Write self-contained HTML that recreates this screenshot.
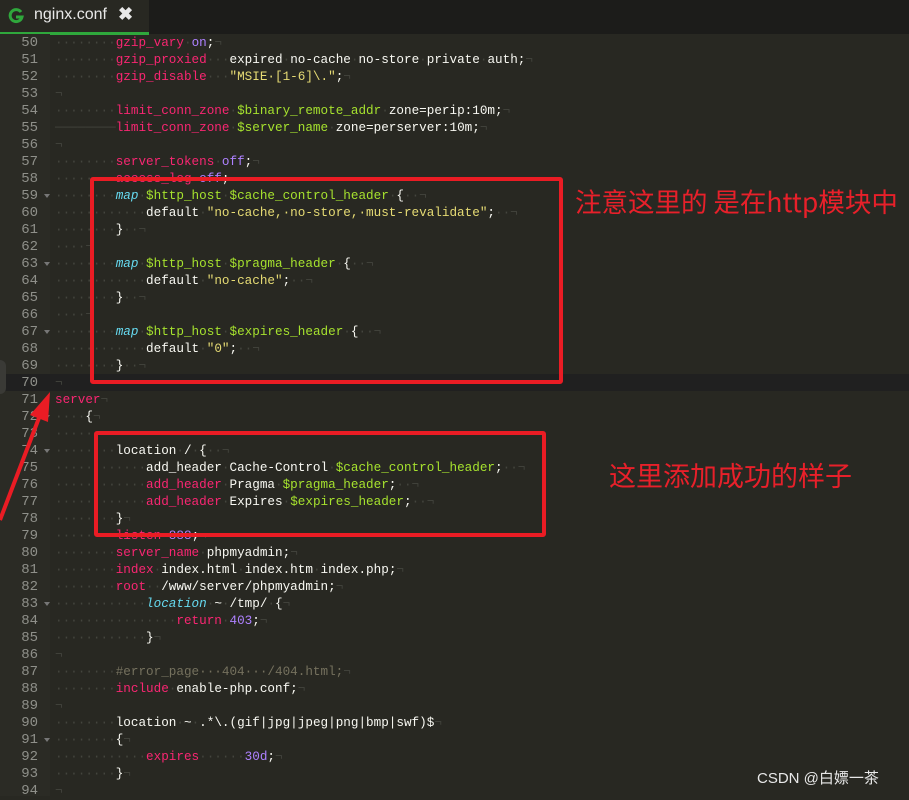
<!DOCTYPE html><html><head><meta charset="utf-8"><style>
body{margin:0;width:909px;height:796px;overflow:hidden;background:#282822;position:relative;font-family:"Liberation Mono",monospace}
.tabbar{position:absolute;left:0;top:0;width:909px;height:34px;background:#1c1c1a}
.tab{position:absolute;left:0;top:0;width:149px;height:32px;background:#282822;border-bottom:3px solid #2fa83c;box-sizing:content-box}
.tab span{position:absolute;left:34px;top:6px;color:#e8e8e8;font:16px "Liberation Sans",sans-serif}
.gut{position:absolute;left:0;top:34px;width:50px;height:762px;background:#2b2b25}
.hl{position:absolute;left:0;top:374px;width:909px;height:17px;background:#202020}
pre{position:absolute;left:0;top:34px;margin:0;font-size:12.65px;line-height:17px;color:#f8f8f2}
.n{display:inline-block;width:38px;text-align:right;color:#8f908a;margin-right:17px;position:relative;top:1px;font-size:14px;line-height:17px;vertical-align:top}
.f::after{content:"";position:absolute;right:-12px;top:6px;border:3px solid transparent;border-top:4px solid #777}
.d{color:#44453e}.p{color:#f92672}.u{color:#ae81ff}.s{color:#e6db74}.g{color:#a6e22e}.b{color:#66d9ef;font-style:italic}.c{color:#75715e}
.box{position:absolute;border:4px solid #ea1c24;border-radius:3px}
.cn{position:absolute;color:#e8202a;font-family:"Noto Sans CJK SC",sans-serif;white-space:nowrap}
</style></head><body>
<div class="tabbar"><div class="tab"><svg style="position:absolute;left:8px;top:8px" width="16" height="16" viewBox="0 0 16 16"><path d="M13 4A6 6 0 1 0 14 9H8" fill="none" stroke="#2fa83c" stroke-width="3"/></svg><span>nginx.conf</span><span style="left:118px;top:4px;font-weight:bold;font-size:18px">✖</span></div></div>
<div class="gut"></div><div class="hl"></div>
<pre><span class="n">50</span><span class="d">········</span><span class="p">gzip_vary</span><span class="d">·</span><span class="u">on</span>;<span class="d">¬</span>
<span class="n">51</span><span class="d">········</span><span class="p">gzip_proxied</span><span class="d">···</span>expired<span class="d">·</span>no-cache<span class="d">·</span>no-store<span class="d">·</span>private<span class="d">·</span>auth;<span class="d">¬</span>
<span class="n">52</span><span class="d">········</span><span class="p">gzip_disable</span><span class="d">···</span><span class="s">"MSIE·[1-6]\."</span>;<span class="d">¬</span>
<span class="n">53</span><span class="d">¬</span>
<span class="n">54</span><span class="d">········</span><span class="p">limit_conn_zone</span><span class="d">·</span><span class="g">$binary_remote_addr</span><span class="d">·</span>zone=perip:10m;<span class="d">¬</span>
<span class="n">55</span><span class="d">────────</span><span class="p">limit_conn_zone</span><span class="d">·</span><span class="g">$server_name</span><span class="d">·</span>zone=perserver:10m;<span class="d">¬</span>
<span class="n">56</span><span class="d">¬</span>
<span class="n">57</span><span class="d">········</span><span class="p">server_tokens</span><span class="d">·</span><span class="u">off</span>;<span class="d">¬</span>
<span class="n">58</span><span class="d">········</span><span class="p">access_log</span><span class="d">·</span><span class="u">off</span>;<span class="d">¬</span>
<span class="n f">59</span><span class="d">········</span><span class="b">map</span><span class="d">·</span><span class="g">$http_host</span><span class="d">·</span><span class="g">$cache_control_header</span><span class="d">·</span>{<span class="d">··¬</span>
<span class="n">60</span><span class="d">············</span>default<span class="d">·</span><span class="s">"no-cache,·no-store,·must-revalidate"</span>;<span class="d">··¬</span>
<span class="n">61</span><span class="d">········</span>}<span class="d">··¬</span>
<span class="n">62</span><span class="d">····¬</span>
<span class="n f">63</span><span class="d">········</span><span class="b">map</span><span class="d">·</span><span class="g">$http_host</span><span class="d">·</span><span class="g">$pragma_header</span><span class="d">·</span>{<span class="d">··¬</span>
<span class="n">64</span><span class="d">············</span>default<span class="d">·</span><span class="s">"no-cache"</span>;<span class="d">··¬</span>
<span class="n">65</span><span class="d">········</span>}<span class="d">··¬</span>
<span class="n">66</span><span class="d">····¬</span>
<span class="n f">67</span><span class="d">········</span><span class="b">map</span><span class="d">·</span><span class="g">$http_host</span><span class="d">·</span><span class="g">$expires_header</span><span class="d">·</span>{<span class="d">··¬</span>
<span class="n">68</span><span class="d">············</span>default<span class="d">·</span><span class="s">"0"</span>;<span class="d">··¬</span>
<span class="n">69</span><span class="d">········</span>}<span class="d">··¬</span>
<span class="n">70</span><span class="d">¬</span>
<span class="n">71</span><span class="p">server</span><span class="d">¬</span>
<span class="n f">72</span><span class="d">····</span>{<span class="d">¬</span>
<span class="n">73</span><span class="d">········</span>
<span class="n f">74</span><span class="d">········</span>location<span class="d">·</span>/<span class="d">·</span>{<span class="d">··¬</span>
<span class="n">75</span><span class="d">············</span>add_header<span class="d">·</span>Cache-Control<span class="d">·</span><span class="g">$cache_control_header</span>;<span class="d">··¬</span>
<span class="n">76</span><span class="d">············</span><span class="p">add_header</span><span class="d">·</span>Pragma<span class="d">·</span><span class="g">$pragma_header</span>;<span class="d">··¬</span>
<span class="n">77</span><span class="d">············</span><span class="p">add_header</span><span class="d">·</span>Expires<span class="d">·</span><span class="g">$expires_header</span>;<span class="d">··¬</span>
<span class="n">78</span><span class="d">········</span>}<span class="d">¬</span>
<span class="n">79</span><span class="d">········</span><span class="p">listen</span><span class="d">·</span><span class="u">888</span>;<span class="d">¬</span>
<span class="n">80</span><span class="d">········</span><span class="p">server_name</span><span class="d">·</span>phpmyadmin;<span class="d">¬</span>
<span class="n">81</span><span class="d">········</span><span class="p">index</span><span class="d">·</span>index.html<span class="d">·</span>index.htm<span class="d">·</span>index.php;<span class="d">¬</span>
<span class="n">82</span><span class="d">········</span><span class="p">root</span><span class="d">··</span>/www/server/phpmyadmin;<span class="d">¬</span>
<span class="n f">83</span><span class="d">············</span><span class="b">location</span><span class="d">·</span>~<span class="d">·</span>/tmp/<span class="d">·</span>{<span class="d">¬</span>
<span class="n">84</span><span class="d">················</span><span class="p">return</span><span class="d">·</span><span class="u">403</span>;<span class="d">¬</span>
<span class="n">85</span><span class="d">············</span>}<span class="d">¬</span>
<span class="n">86</span><span class="d">¬</span>
<span class="n">87</span><span class="d">········</span><span class="c">#error_page···404···/404.html;</span><span class="d">¬</span>
<span class="n">88</span><span class="d">········</span><span class="p">include</span><span class="d">·</span>enable-php.conf;<span class="d">¬</span>
<span class="n">89</span><span class="d">¬</span>
<span class="n">90</span><span class="d">········</span>location<span class="d">·</span>~<span class="d">·</span>.*\.(gif|jpg|jpeg|png|bmp|swf)$<span class="d">¬</span>
<span class="n f">91</span><span class="d">········</span>{<span class="d">¬</span>
<span class="n">92</span><span class="d">············</span><span class="p">expires</span><span class="d">······</span><span class="u">30d</span>;<span class="d">¬</span>
<span class="n">93</span><span class="d">········</span>}<span class="d">¬</span>
<span class="n">94</span><span class="d">¬</span></pre>
<div class="box" style="left:90px;top:177px;width:465px;height:199px"></div>
<div class="box" style="left:94px;top:431px;width:444px;height:98px"></div>
<div class="cn" style="left:575px;top:181px;font-size:26.5px">注意这里的 是在http模块中</div>
<div class="cn" style="left:609px;top:455px;font-size:27px">这里添加成功的样子</div>
<svg style="position:absolute;left:0;top:380px" width="60" height="150"><path d="M0 140L42 30" stroke="#ea1c24" stroke-width="4"/><path d="M50 12L30 35L48 42Z" fill="#ea1c24"/></svg>
<div style="position:absolute;left:-6px;top:360px;width:12px;height:34px;background:#3a3a36;border-radius:6px"></div>
<div style="position:absolute;left:757px;top:767px;color:#e8e8e8;font:15px 'Liberation Sans','Noto Sans CJK SC',sans-serif">CSDN @白嫖一茶</div>
</body></html>
